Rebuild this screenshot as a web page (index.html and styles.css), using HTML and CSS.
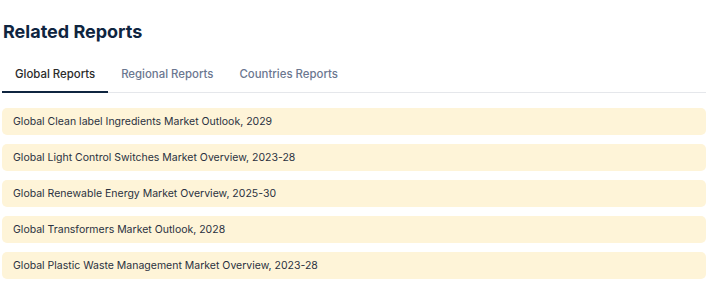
FILE: index.html
```html
<!DOCTYPE html>
<html lang="en">
<head>
    <meta charset="UTF-8">
    <meta name="viewport" content="width=device-width, initial-scale=1.0">
    <title>Related Reports</title>
    <link rel="stylesheet" href="styles.css">
</head>
<body>
    <div class="related">
        <h2 class="related-title">Related Reports</h2>
        <div class="tabs">
            <div class="tab active">Global Reports</div>
            <div class="tab">Regional Reports</div>
            <div class="tab">Countries Reports</div>
        </div>
        <div class="report-list">
            <div class="report-item">Global Clean label Ingredients Market Outlook, 2029</div>
            <div class="report-item">Global Light Control Switches Market Overview, 2023-28</div>
            <div class="report-item">Global Renewable Energy Market Overview, 2025-30</div>
            <div class="report-item">Global Transformers Market Outlook, 2028</div>
            <div class="report-item">Global Plastic Waste Management Market Overview, 2023-28</div>
        </div>
    </div>
</body>
</html>
```

FILE: styles.css
```css
body {
    font-family: 'Inter', sans-serif;
    background: #ffffff;
    margin: 0;
}
.related {
    padding: 0 9px 0 2px;
}
.related-title {
    margin: 0;
    padding: 20px 0 0 1px;
    font-size: 18px;
    font-weight: 700;
    color: #0f2540;
    line-height: 24px;
}
.tabs {
    display: flex;
    margin-top: 13px;
    border-bottom: 1px solid #e5e7eb;
}
.tab {
    padding: 9px 13px 8px;
    font-size: 11.4px;
    font-weight: 500;
    color: #6b7790;
    line-height: 17px;
}
.tab.active {
    color: #2b2b2b;
    border-bottom: 2px solid #0f2540;
    margin-bottom: -1px;
}
.report-list {
    display: flex;
    flex-direction: column;
    gap: 9px;
    margin-top: 15px;
}
.report-item {
    background: #fef4d8;
    border-radius: 5px;
    padding: 6px 11px;
    font-size: 10.5px;
    line-height: 15px;
    color: #2a3140;
}
```
